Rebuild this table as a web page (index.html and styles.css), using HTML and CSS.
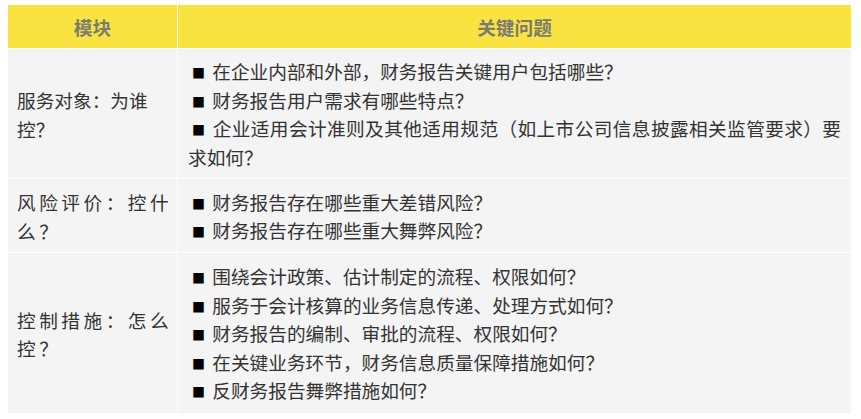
FILE: index.html
```html
<!DOCTYPE html>
<html lang="zh-CN">
<head>
<meta charset="utf-8">
<title>模块与关键问题</title>
<link rel="stylesheet" href="styles.css">
</head>
<body>
<div class="table">
  <div class="th">模块</div>
  <div class="th">关键问题</div>

  <div class="td mod">服务对象：为谁控？</div>
  <div class="td qs">
    <p><span class="sq">■</span>在企业内部和外部，财务报告关键用户包括哪些？</p>
    <p><span class="sq">■</span>财务报告用户需求有哪些特点？</p>
    <p><span class="sq">■</span>企业适用会计准则及其他适用规范（如上市公司信息披露相关监管要求）要求如何？</p>
  </div>

  <div class="td mod spaced">风险评价：控什么？</div>
  <div class="td qs">
    <p><span class="sq">■</span>财务报告存在哪些重大差错风险？</p>
    <p><span class="sq">■</span>财务报告存在哪些重大舞弊风险？</p>
  </div>

  <div class="td mod spaced">控制措施：怎么控？</div>
  <div class="td qs">
    <p><span class="sq">■</span>围绕会计政策、估计制定的流程、权限如何？</p>
    <p><span class="sq">■</span>服务于会计核算的业务信息传递、处理方式如何？</p>
    <p><span class="sq">■</span>财务报告的编制、审批的流程、权限如何？</p>
    <p><span class="sq">■</span>在关键业务环节，财务信息质量保障措施如何？</p>
    <p><span class="sq">■</span>反财务报告舞弊措施如何？</p>
  </div>
</div>
</body>
</html>
```

FILE: styles.css
```css
html, body {
  background: #ffffff;
}
body {
  margin: 5px 8px;
  font-family: "Noto Sans CJK SC", "Noto Sans", sans-serif;
  font-size: 18.67px;
  color: #333333;
}
.table {
  display: grid;
  grid-template-columns: 169px 673px;
  grid-template-rows: 43px 129px 73px 160px;
  gap: 1px;
  background: #ffffff;
  width: 843px;
}
.th {
  background: #f9e340;
  color: #7b7b72;
  font-weight: bold;
  display: flex;
  align-items: center;
  justify-content: center;
  line-height: 28px;
}
.td {
  background: #f4f4f4;
  line-height: 28.5px;
}
.mod {
  display: flex;
  align-items: center;
  padding: 2px 3px 0 9px;
}
.mod.spaced {
  letter-spacing: 3.5px;
}
.qs {
  display: flex;
  flex-direction: column;
  justify-content: center;
  padding: 1px 10px 0 10px;
  text-align: justify;
}
.qs p {
  margin: 0;
}
.sq {
  display: inline-block;
  width: 24.3px;
  font-size: 13px;
  line-height: 1;
  color: #000000;
  padding-left: 4px;
  box-sizing: border-box;
  vertical-align: 1px;
}
```
